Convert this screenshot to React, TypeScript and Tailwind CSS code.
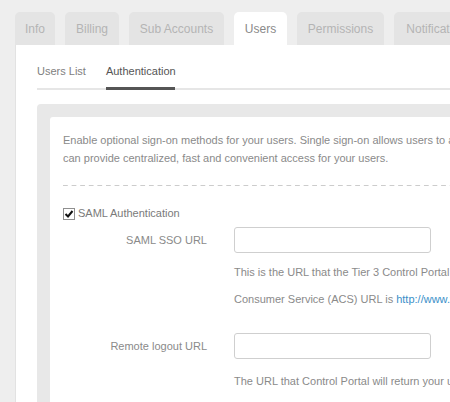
import React from "react";

const font = { fontFamily: '"Liberation Sans", Arial, sans-serif' };

function Tab({ label, active, w }: { label: string; active?: boolean; w: string }) {
  return (
    <div
      className={`${w} shrink-0 h-[33px] rounded-t-[5px] flex items-center justify-center pt-[1px] text-[12px] whitespace-nowrap ${
        active ? "bg-white text-[#8a8a8a]" : "bg-[#e4e4e4] text-[#b4b4b4]"
      }`}
    >
      {label}
    </div>
  );
}

function CheckBox() {
  return (
    <div className="w-[12px] h-[12px] border border-[#8f8f8f] bg-white flex items-center justify-center shrink-0">
      <svg width="10" height="10" viewBox="0 0 10 10">
        <path d="M1.5 5 L4 7.5 L8.5 2" fill="none" stroke="#111" strokeWidth="2" />
      </svg>
    </div>
  );
}

export default function App() {
  return (
    <div className="w-[450px] h-[402px] overflow-hidden bg-[#eeeeee]" style={font}>
      <div className="w-[700px] pl-[15px] pt-[12px]">
        {/* Tabs */}
        <div className="flex gap-[10px]">
          <Tab label="Info" w="w-[40px]" />
          <Tab label="Billing" w="w-[54px]" />
          <Tab label="Sub Accounts" w="w-[95px]" />
          <Tab label="Users" w="w-[53px]" active />
          <Tab label="Permissions" w="w-[87px]" />
          <Tab label="Notifications" w="w-[90px]" />
        </div>

        {/* White panel */}
        <div className="bg-white border-l border-[#e2e2e2] pl-[21px] pt-[18px] h-[400px]">
          {/* Sub tabs */}
          <div className="flex gap-[20px] border-b-2 border-[#e6e6e6] text-[11px] leading-[16px]">
            <div className="pb-[8px] border-b-[3px] border-transparent -mb-[2px] text-[#808080]">Users List</div>
            <div className="pb-[8px] border-b-[3px] border-[#555555] -mb-[2px] text-[#555555] w-[69px]">Authentication</div>
          </div>

          {/* Gray panel */}
          <div className="mt-[14px] bg-[#e8e8e8] rounded-[4px] pl-[13px] pt-[13px] h-[320px]">
            <div className="bg-white rounded-tl-[3px] pl-[13px] pt-[14px] h-[300px] text-[11px] text-[#8a8a8a]">
              <div className="leading-[18px]">
                <div className="whitespace-nowrap">
                  Enable optional sign-on methods for your users. Single sign-on allows users to access multiple applications with one login.
                </div>
                <div className="whitespace-nowrap">can provide centralized, fast and convenient access for your users.</div>
              </div>

              <div className="mt-[18px] h-px bg-[linear-gradient(to_right,#cccccc_5px,transparent_5px)] bg-[length:8.6px_1px]" />

              <div className="mt-[21px] flex items-center gap-[3px] leading-[13px]">
                <CheckBox />
                <span className="text-[#7a7a7a]">SAML Authentication</span>
              </div>

              {/* SAML SSO URL */}
              <div className="mt-[7px] flex items-center">
                <div className="w-[144px] text-right text-[#8a8a8a]">SAML SSO URL</div>
                <div className="ml-[27px] w-[197px] h-[26px] rounded-[3px] border border-[#cfcfcf] bg-white" />
              </div>
              <div className="ml-[171px] leading-[20px] whitespace-nowrap">
                <div className="mt-[9px]">This is the URL that the Tier 3 Control Portal will use to sign users in via SAML. The Assertion</div>
                <div className="mt-[7px]">
                  Consumer Service (ACS) URL is <span className="text-[#3a8fc9]">http://www.tier3.com/SAMLAuth</span>
                </div>
              </div>

              {/* Remote logout URL */}
              <div className="mt-[24px] flex items-center">
                <div className="w-[144px] text-right text-[#8a8a8a]">Remote logout URL</div>
                <div className="ml-[27px] w-[197px] h-[26px] rounded-[3px] border border-[#cfcfcf] bg-white" />
              </div>
              <div className="ml-[171px] mt-[12px] leading-[20px] whitespace-nowrap">
                The URL that Control Portal will return your users to after they log out.
              </div>
            </div>
          </div>
        </div>
      </div>
    </div>
  );
}
